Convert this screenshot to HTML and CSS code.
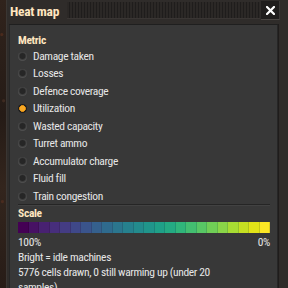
FILE: index.html
```html
<!DOCTYPE html>
<html lang="en">
<head>
<meta charset="utf-8">
<title>Heat map</title>
<link rel="stylesheet" href="styles.css">
</head>
<body>
<div class="backdrop"></div>
<div class="window">
  <div class="titlebar">
    <div class="title">Heat map</div>
    <div class="drag"></div>
    <div class="close">
      <svg width="9" height="9" viewBox="0 0 9 9"><path d="M1 1 L8 8 M8 1 L1 8" stroke="#fff" stroke-width="2.2" stroke-linecap="square"/></svg>
    </div>
  </div>
  <div class="panel">
    <div class="heading">Metric</div>
    <div class="options">
      <div class="option"><span class="radio"></span>Damage taken</div>
      <div class="option"><span class="radio"></span>Losses</div>
      <div class="option"><span class="radio"></span>Defence coverage</div>
      <div class="option"><span class="radio on"></span>Utilization</div>
      <div class="option"><span class="radio"></span>Wasted capacity</div>
      <div class="option"><span class="radio"></span>Turret ammo</div>
      <div class="option"><span class="radio"></span>Accumulator charge</div>
      <div class="option"><span class="radio"></span>Fluid fill</div>
      <div class="option"><span class="radio"></span>Train congestion</div>
    </div>
    <div class="sep"></div>
    <div class="heading scale-title">Scale</div>
    <div class="scale">
      <span style="background:#440154"></span>
      <span style="background:#471164"></span>
      <span style="background:#482171"></span>
      <span style="background:#472e7c"></span>
      <span style="background:#443c83"></span>
      <span style="background:#3f4889"></span>
      <span style="background:#3a548c"></span>
      <span style="background:#35608d"></span>
      <span style="background:#2f6b8e"></span>
      <span style="background:#2b768e"></span>
      <span style="background:#26818e"></span>
      <span style="background:#238b8d"></span>
      <span style="background:#20958b"></span>
      <span style="background:#1fa088"></span>
      <span style="background:#24aa83"></span>
      <span style="background:#30b57b"></span>
      <span style="background:#43be71"></span>
      <span style="background:#58c765"></span>
      <span style="background:#70ce56"></span>
      <span style="background:#8ad548"></span>
      <span style="background:#a8dc33"></span>
      <span style="background:#c6e022"></span>
      <span style="background:#e2e418"></span>
      <span style="background:#fde725"></span>
    </div>
    <div class="scale-labels"><span>100%</span><span>0%</span></div>
    <div class="line">Bright = idle machines</div>
    <div class="line">5776 cells drawn, 0 still warming up (under 20 samples)</div>
  </div>
</div>
</body>
</html>
```
FILE: styles.css
```css
* { box-sizing: border-box; }
html, body { margin: 0; }
body {
  width: 288px;
  height: 288px;
  overflow: hidden;
  display: flex;
  background: #2a1f1a;
  font-family: "Roboto Condensed", "Liberation Sans Narrow", Lato, sans-serif;
}
.backdrop {
  width: 6px;
  flex: none;
  background:
    radial-gradient(circle at 30% 12%, #4a2a1c 0 1px, transparent 2px),
    radial-gradient(circle at 60% 35%, #3e2a20 0 1px, transparent 2px),
    radial-gradient(circle at 40% 70%, #4a2b1e 0 1px, transparent 2px),
    linear-gradient(180deg, #30231c, #251b16 40%, #33251d 65%, #271c17);
}
.window {
  flex: 1;
  min-width: 0;
  background: #2f2c2a;
  padding: 1px 8px 0 3px;
  box-shadow: inset 1px 0 0 #3a3633;
}
.titlebar {
  display: flex;
  height: 19px;
}
.title {
  font-weight: 700;
  font-size: 13.5px;
  letter-spacing: -0.3px;
  color: #ffe6c0;
  line-height: 19px;
  padding: 1px 0 0 1px;
}
.drag {
  flex: 1;
  margin: 1px 1px 1px 8px;
  background: repeating-linear-gradient(90deg, #2b2826 0 2px, #1f1d1c 2px 3px);
  border-bottom: 1px solid #393533;
}
.close {
  width: 19px;
  background: #1f1d1c;
  border-bottom: 1px solid #4a4643;
  border-right: 1px solid #3a3735;
  display: flex;
  align-items: center;
  justify-content: center;
}
.panel {
  margin: 4px 2px 0 0;
  padding: 9px 8px 0 9px;
  background: #383838;
  height: 300px;
  box-shadow: inset 0 1px 0 #1f1f1f, inset 1px 0 0 #262626, inset -1px 0 0 #262626, 1px 0 0 #1f1c1b;
  color: #e6e6e6;
  font-size: 11.5px;
  letter-spacing: -0.35px;
}
.heading {
  font-weight: 700;
  font-size: 11.5px;
  letter-spacing: -0.3px;
  color: #ffe6c0;
  line-height: 15px;
}
.options {
  display: flex;
  flex-direction: column;
  gap: 2.5px;
  margin-top: 0.5px;
}
.option {
  display: flex;
  align-items: center;
  gap: 6px;
  height: 15px;
  line-height: 15px;
}
.radio {
  width: 9px;
  height: 9px;
  flex: none;
  border-radius: 50%;
  background: radial-gradient(circle at 50% 45%, #262626 0 2.5px, #3d3d3d 3.5px, #4f4f4f 4.5px);
}
.radio.on {
  background: radial-gradient(circle, #f7a824 0 2.6px, #c47a10 3.2px, #1d1d1d 3.6px);
}
.sep {
  height: 2px;
  border-top: 1px solid #252525;
  border-bottom: 1px solid #424242;
}
.scale-title {
  margin-top: 0.5px;
}
.scale {
  display: grid;
  grid-template-columns: repeat(24, 1fr);
  height: 11px;
  margin-top: 1px;
}
.scale span {
  box-shadow: inset -1px 0 0 rgba(0, 0, 0, 0.12);
}
.scale-labels {
  display: flex;
  justify-content: space-between;
  line-height: 15px;
  margin-top: 2px;
}
.line {
  line-height: 15px;
  max-width: 222px;
}
```
